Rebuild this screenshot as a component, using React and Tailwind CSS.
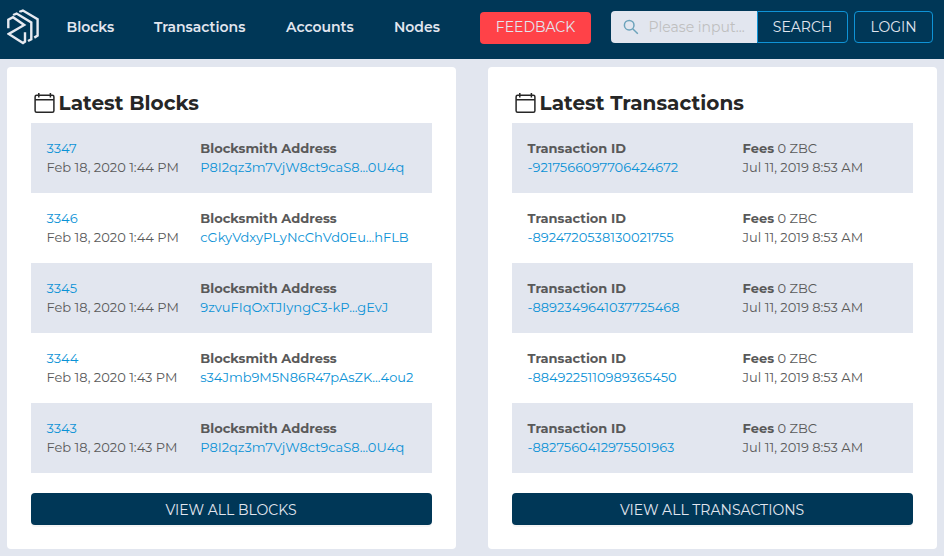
import React from "react";

const LINKS = [
  { label: "Blocks", cls: "w-[87.5px]" },
  { label: "Transactions", cls: "w-[132px]" },
  { label: "Accounts", cls: "w-[108px]" },
  { label: "Nodes", cls: "w-[86px]" },
];

const BLOCKS = [
  ["3347", "Feb 18, 2020 1:44 PM", "P8I2qz3m7VjW8ct9caS8...0U4q"],
  ["3346", "Feb 18, 2020 1:44 PM", "cGkyVdxyPLyNcChVd0Eu...hFLB"],
  ["3345", "Feb 18, 2020 1:44 PM", "9zvuFIqOxTJIyngC3-kP...gEvJ"],
  ["3344", "Feb 18, 2020 1:43 PM", "s34Jmb9M5N86R47pAsZK...4ou2"],
  ["3343", "Feb 18, 2020 1:43 PM", "P8I2qz3m7VjW8ct9caS8...0U4q"],
];

const TRANSACTIONS = [
  "-9217566097706424672",
  "-8924720538130021755",
  "-8892349641037725468",
  "-8849225110989365450",
  "-8827560412975501963",
];

function Logo() {
  return (
    <svg width="32" height="36" viewBox="0 0 32 36" fill="none" stroke="#e6e9f0" strokeWidth="2.4">
      <path d="M1.3 19.3V10.8L6 8.2L17.2 16L1.8 24.9L16 34L18 32.6V23.3" />
      <path d="M7 6.6V5.8L9.6 4.5L24.3 13.5V30.2L21 32" />
      <path d="M13.3 3.2V2.6L15.9 1.5L30.6 10.3V26.6L27.3 28.6" />
    </svg>
  );
}

function CalendarIcon() {
  return (
    <svg width="21" height="21" viewBox="0 0 21 21" fill="none" stroke="#262626" strokeWidth="1.5">
      <rect x="1.1" y="2.2" width="18.8" height="17.1" rx="1.5" />
      <path d="M1.1 6.7H19.9M4.8 0V4.5M16.4 0V4.5" />
    </svg>
  );
}

function Card({ title, button, children }) {
  return (
    <section className="h-[482px] w-[449px] rounded bg-white px-6 pt-5">
      <h2 className="mb-1 flex h-8 items-center gap-[3.5px] pl-[3px] text-[#262626]">
        <CalendarIcon />
        <span className="text-[20px] font-bold tracking-[0.03px]">{title}</span>
      </h2>
      <div className="text-[13px] leading-[19px] text-[#595959]">{children}</div>
      <button className="mt-5 h-8 w-full rounded bg-[#003757] pt-0.5 pr-px text-[14px] text-[#e2e6ef] shadow-[0_2px_0_rgba(0,0,0,0.04)]">
        {button}
      </button>
    </section>
  );
}

export default function App() {
  return (
    <div className="h-[556px] w-[944px] overflow-hidden bg-[#e2e6ef] font-['Montserrat','Inter',sans-serif]">
      <header className="flex h-[59px] bg-[#003757] pt-[9px] pl-[7px] text-[#e2e6ef]">
        <Logo />
        <nav className="flex h-9 items-center pl-[27.5px] text-[14px] font-semibold">
          {LINKS.map((l) => (
            <a key={l.label} className={l.cls}>{l.label}</a>
          ))}
        </nav>
        <button className="mt-[3px] h-8 w-[111px] rounded bg-[#ff4248] pb-0.5 text-[14px]">FEEDBACK</button>
        <div className="mt-[2px] ml-5 flex h-8">
          <div className="flex w-[146px] items-center rounded-l bg-[#e2e6ef] pl-3">
            <svg width="16" height="16" viewBox="0 0 16 16" fill="none" stroke="#6ca3bb" strokeWidth="1.5">
              <circle cx="6.2" cy="6.2" r="4.8" />
              <path d="M9.7 9.7L14.8 14.8" />
            </svg>
            <span className="ml-[9.5px] text-[14px] text-[#bfbfbf]">Please input...</span>
          </div>
          <button className="w-[91px] rounded-r border border-[#0f93d6] text-[14px]">SEARCH</button>
          <button className="ml-1.5 w-[79px] rounded border border-[#0f93d6] text-[14px]">LOGIN</button>
        </div>
      </header>
      <main className="flex gap-8 pt-2 pl-[7px]">
        <Card title="Latest Blocks" button="VIEW ALL BLOCKS">
          {BLOCKS.map(([id, date, address]) => (
            <div key={id} className="flex h-[70px] pt-4 pl-[15.5px] odd:bg-[#e2e6ef]">
              <div className="w-[153.8px]">
                <div className="text-[#0b92d6]">{id}</div>
                <div>{date}</div>
              </div>
              <div>
                <div className="font-bold">Blocksmith Address</div>
                <div className="text-[#0b92d6]">{address}</div>
              </div>
            </div>
          ))}
        </Card>
        <Card title="Latest Transactions" button="VIEW ALL TRANSACTIONS">
          {TRANSACTIONS.map((id) => (
            <div key={id} className="flex h-[70px] pt-4 pl-[15.5px] odd:bg-[#e2e6ef]">
              <div className="w-[215.1px]">
                <div className="font-bold">Transaction ID</div>
                <div className="text-[#0b92d6]">{id}</div>
              </div>
              <div>
                <div><b>Fees</b> 0 ZBC</div>
                <div>Jul 11, 2019 8:53 AM</div>
              </div>
            </div>
          ))}
        </Card>
      </main>
    </div>
  );
}
